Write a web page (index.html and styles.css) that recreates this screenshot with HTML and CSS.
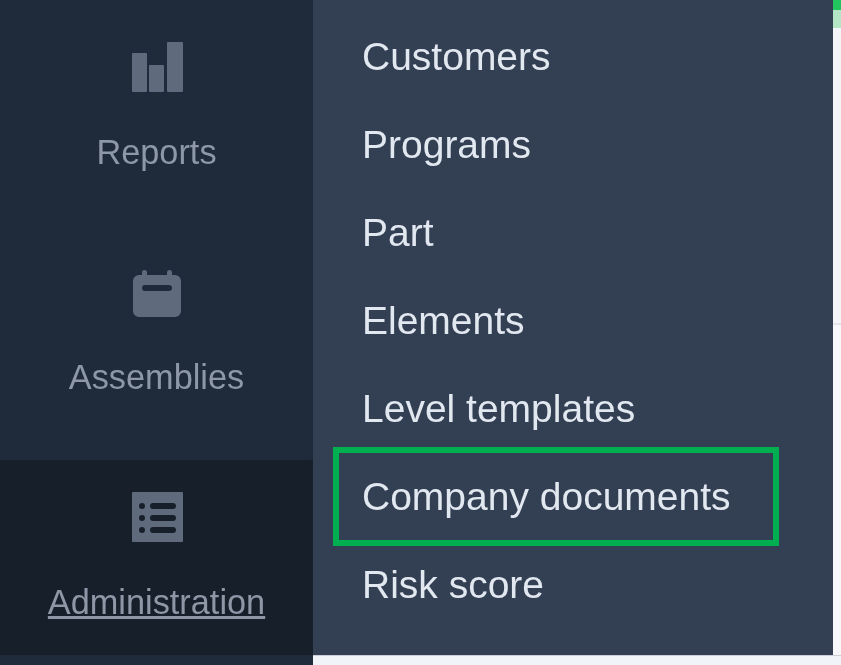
FILE: index.html
```html
<!DOCTYPE html>
<html lang="en">
<head>
<meta charset="utf-8">
<title>Administration menu</title>
<link rel="stylesheet" href="styles.css">
</head>
<body>
<div class="shell">
  <aside class="sidebar">
    <a class="nav-item nav-reports" href="#">
      <svg class="nav-icon" width="52" height="50" viewBox="0 0 52 50"><path d="M2 11h13a1 1 0 0 1 1 1v37a1 1 0 0 1-1 1H2a1 1 0 0 1-1-1V12a1 1 0 0 1 1-1zM19 23h13a1 1 0 0 1 1 1v25a1 1 0 0 1-1 1H19a1 1 0 0 1-1-1V24a1 1 0 0 1 1-1zM37 0h14a1 1 0 0 1 1 1v48a1 1 0 0 1-1 1H37a1 1 0 0 1-1-1V1a1 1 0 0 1 1-1z"/></svg>
      <span class="nav-label">Reports</span>
    </a>
    <a class="nav-item nav-assemblies" href="#">
      <svg class="nav-icon" width="48" height="47" viewBox="0 0 48 47"><path fill-rule="evenodd" d="M11.500 0a2.500 2.500 0 0 1 2.500 2.500V5h20V2.500a2.500 2.500 0 0 1 5 0V5h3a6 6 0 0 1 6 6v30a6 6 0 0 1-6 6H6a6 6 0 0 1-6-6V11a6 6 0 0 1 6-6h3V2.500A2.500 2.500 0 0 1 11.500 0zM12 15a3 3 0 0 0 0 6h24a3 3 0 0 0 0-6z"/></svg>
      <span class="nav-label">Assemblies</span>
    </a>
    <a class="nav-item nav-active" href="#">
      <svg class="nav-icon" width="52" height="50" viewBox="0 0 52 50"><path fill-rule="evenodd" d="M1 0h49a1 1 0 0 1 1 1v48a1 1 0 0 1-1 1H1a1 1 0 0 1-1-1V1a1 1 0 0 1 1-1zM10 11a3 3 0 1 0 0 6 3 3 0 0 0 0-6zM21 11a3 3 0 0 0 0 6h20a3 3 0 0 0 0-6zM10 23a3 3 0 1 0 0 6 3 3 0 0 0 0-6zM21 23a3 3 0 0 0 0 6h20a3 3 0 0 0 0-6zM10 35a3 3 0 1 0 0 6 3 3 0 0 0 0-6zM21 35a3 3 0 0 0 0 6h20a3 3 0 0 0 0-6z"/></svg>
      <span class="nav-label">Administration</span>
    </a>
  </aside>
  <div class="content">
    <div class="content-top">
      <nav class="submenu">
        <a class="submenu-item" href="#"><span class="submenu-text">Customers</span></a>
        <a class="submenu-item" href="#"><span class="submenu-text">Programs</span></a>
        <a class="submenu-item" href="#"><span class="submenu-text">Part</span></a>
        <a class="submenu-item" href="#"><span class="submenu-text">Elements</span></a>
        <a class="submenu-item" href="#"><span class="submenu-text">Level templates</span></a>
        <a class="submenu-item submenu-highlight" href="#"><span class="submenu-text">Company documents</span></a>
        <a class="submenu-item" href="#"><span class="submenu-text">Risk score</span></a>
      </nav>
      <div class="page-edge">
        <div class="edge-green"></div>
        <div class="edge-tint"></div>
        <div class="edge-upper"></div>
        <div class="edge-lower"></div>
      </div>
    </div>
    <div class="content-bottom"></div>
  </div>
</div>
</body>
</html>
```
FILE: styles.css
```css
*,
*::after {
  box-sizing: border-box;
}

html,
body {
  margin: 0;
  height: 100%;
  overflow: hidden;
  background: #f1f5f9;
}

body {
  font-family: "Liberation Sans", Arial, sans-serif;
}

a {
  text-decoration: none;
}

.shell {
  display: flex;
  width: 841px;
  height: 665px;
}

.sidebar {
  display: flex;
  flex-direction: column;
  gap: 30px;
  flex: 0 0 313px;
  padding-top: 10px;
  background: #1f2a3b;
}

.nav-item {
  display: flex;
  flex-direction: column;
  align-items: center;
  height: 195px;
  color: #8d97a6;
  font-size: 34.3px;
  line-height: 38px;
}

.nav-reports {
  padding-top: 32px;
}

.nav-assemblies {
  padding-top: 35px;
}

.nav-active {
  padding-top: 32px;
  background: #171f2a;
}

.nav-active .nav-label {
  text-decoration: underline;
}

.nav-icon {
  flex: none;
  margin-left: 2px;
  fill: #5f6b7c;
  filter: blur(0.5px);
}

.nav-reports .nav-icon,
.nav-assemblies .nav-icon {
  margin-left: 0;
}

.nav-label {
  margin-top: 41px;
  filter: blur(0.6px);
}

.content {
  display: flex;
  flex: 1;
  flex-direction: column;
  min-width: 0;
}

.content-top {
  display: flex;
  height: 655px;
}

.submenu {
  display: flex;
  flex-direction: column;
  flex: 0 0 520px;
  padding-top: 13px;
  background: #334054;
  box-shadow: 1px 1px 2px rgba(30, 41, 59, 0.7);
}

.submenu-item {
  position: relative;
  display: flex;
  align-items: center;
  height: 88px;
  padding-left: 49px;
  color: #e2e8f0;
  font-size: 39px;
}

.submenu-text {
  filter: blur(0.5px);
}

.submenu-highlight::after {
  content: "";
  position: absolute;
  top: -6px;
  left: 20px;
  width: 446px;
  height: 99px;
  border: 6px solid #00b050;
}

.page-edge {
  display: flex;
  flex: 1;
  flex-direction: column;
  background: #ffffff;
}

.edge-green {
  height: 10px;
  background: #22c55e;
}

.edge-tint {
  height: 18px;
  background: #b4e6c6;
}

.edge-upper {
  height: 297px;
  background: #f4f5f9;
  border-bottom: 2px solid #e2e5ec;
}

.edge-lower {
  flex: 1;
  background: #f7f8fb;
}

.content-bottom {
  height: 10px;
  background: #f1f5f9;
  border-top: 1px solid #cbd0d8;
}
```
